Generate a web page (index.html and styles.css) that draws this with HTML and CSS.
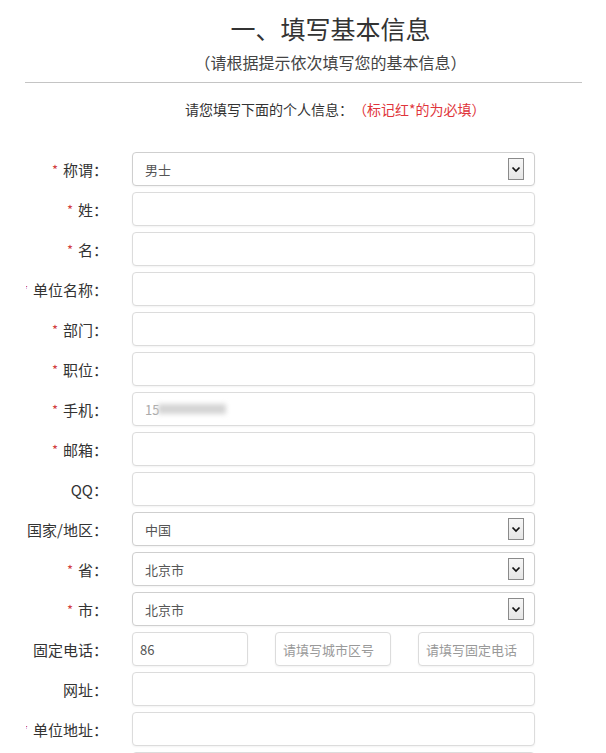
FILE: index.html
```html
<!DOCTYPE html>
<html lang="zh-CN">
<head>
  <meta charset="UTF-8" />
  <meta name="viewport" content="width=device-width, initial-scale=1.0"/>
  <title>填写基本信息</title>
  <link rel="stylesheet" href="styles.css">
</head>
<body>

<div class="page">
  <div class="head">
    <h1>一、填写基本信息</h1>
    <p class="sub">（请根据提示依次填写您的基本信息）</p>
  </div>

  <hr class="rule" />

  <p class="intro">请您填写下面的个人信息：<span class="red">（标记红*的为必填）</span></p>

  <form id="infoForm" class="form">
    <div class="row">
      <label class="lbl"><span class="req">*</span><span>称谓：</span></label>
      <div class="select-wrap">
        <select class="field">
          <option>男士</option>
          <option>女士</option>
        </select>
        <span class="arrow"><svg width="14" height="20" viewBox="0 0 14 20"><path d="M3.5 8.5 L7 12 L10.5 8.5" fill="none" stroke="#111" stroke-width="1.7"/></svg></span>
      </div>
    </div>

    <div class="row">
      <label class="lbl"><span class="req">*</span><span>姓：</span></label>
      <input type="text" class="field" />
    </div>

    <div class="row">
      <label class="lbl"><span class="req">*</span><span>名：</span></label>
      <input type="text" class="field" />
    </div>

    <div class="row">
      <label class="lbl"><span class="req">*</span><span>单位名称：</span></label>
      <input type="text" class="field" />
    </div>

    <div class="row">
      <label class="lbl"><span class="req">*</span><span>部门：</span></label>
      <input type="text" class="field" />
    </div>

    <div class="row">
      <label class="lbl"><span class="req">*</span><span>职位：</span></label>
      <input type="text" class="field" />
    </div>

    <div class="row">
      <label class="lbl"><span class="req">*</span><span>手机：</span></label>
      <div class="select-wrap">
        <input type="text" class="field phone" value="15" />
        <span class="blur"></span>
      </div>
    </div>

    <div class="row">
      <label class="lbl"><span class="req">*</span><span>邮箱：</span></label>
      <input type="text" class="field" />
    </div>

    <div class="row">
      <label class="lbl"><span>QQ：</span></label>
      <input type="text" class="field" />
    </div>

    <div class="row">
      <label class="lbl"><span>国家/地区：</span></label>
      <div class="select-wrap">
        <select class="field">
          <option>中国</option>
        </select>
        <span class="arrow"><svg width="14" height="20" viewBox="0 0 14 20"><path d="M3.5 8.5 L7 12 L10.5 8.5" fill="none" stroke="#111" stroke-width="1.7"/></svg></span>
      </div>
    </div>

    <div class="row">
      <label class="lbl"><span class="req">*</span><span>省：</span></label>
      <div class="select-wrap">
        <select class="field">
          <option>北京市</option>
        </select>
        <span class="arrow"><svg width="14" height="20" viewBox="0 0 14 20"><path d="M3.5 8.5 L7 12 L10.5 8.5" fill="none" stroke="#111" stroke-width="1.7"/></svg></span>
      </div>
    </div>

    <div class="row">
      <label class="lbl"><span class="req">*</span><span>市：</span></label>
      <div class="select-wrap">
        <select class="field">
          <option>北京市</option>
        </select>
        <span class="arrow"><svg width="14" height="20" viewBox="0 0 14 20"><path d="M3.5 8.5 L7 12 L10.5 8.5" fill="none" stroke="#111" stroke-width="1.7"/></svg></span>
      </div>
    </div>

    <div class="row">
      <label class="lbl"><span>固定电话：</span></label>
      <div class="tel">
        <input type="text" class="field small" value="86" />
        <input type="text" class="field small" placeholder="请填写城市区号" />
        <input type="text" class="field small" placeholder="请填写固定电话" />
      </div>
    </div>

    <div class="row">
      <label class="lbl"><span>网址：</span></label>
      <input type="text" class="field" />
    </div>

    <div class="row">
      <label class="lbl"><span class="req">*</span><span>单位地址：</span></label>
      <input type="text" class="field" />
    </div>

    <div class="row last">
      <label class="lbl"><span>邮编：</span></label>
      <input type="text" class="field" />
    </div>
  </form>
</div>

</body>
</html>
```

FILE: styles.css
```css
body {
  font-family: "Noto Sans CJK SC", "Noto Sans", sans-serif;
  margin: 0;
  padding: 0;
  background: #fff;
  color: #333;
  text-spacing-trim: space-all;
}

.page {
  padding: 0 24px 0 25px;
}

.head {
  text-align: center;
  padding-left: 54px;
}

h1 {
  font-size: 25px;
  font-weight: normal;
  line-height: 34px;
  margin: 11px 0 0;
  color: #333;
}

.sub {
  font-size: 16px;
  line-height: 24px;
  margin: 5px 0 0;
  color: #444;
}

.rule {
  border: none;
  border-top: 1px solid #c4c4c4;
  margin: 8px 0 0;
}

.intro {
  font-size: 14px;
  line-height: 20px;
  margin: 16px 0 0;
  padding-left: 160px;
  color: #333;
}

.red {
  color: #e0353b;
}

.form {
  margin-top: 33px;
  height: 601px;
  overflow: hidden;
}

.row {
  display: flex;
  align-items: center;
  height: 34px;
  margin-bottom: 6px;
}

.lbl {
  display: flex;
  justify-content: flex-end;
  align-items: center;
  width: 82px;
  margin-left: 1px;
  margin-right: 24px;
  white-space: nowrap;
  overflow: hidden;
  font-size: 15px;
  color: #333;
}

.req {
  color: #d2403f;
  font-size: 13px;
  margin-right: 5px;
}

.field {
  box-sizing: border-box;
  width: 403px;
  height: 34px;
  padding: 0 12px;
  border: 1px solid #dcdcdc;
  border-radius: 4px;
  background: #fff;
  font-family: inherit;
  font-size: 13px;
  color: #555;
  box-shadow: 0 1px 2px rgba(0, 0, 0, 0.05);
  outline: none;
}

select.field {
  appearance: none;
  -webkit-appearance: none;
  border-color: #cfcfcf;
}

.select-wrap {
  position: relative;
  width: 403px;
  height: 34px;
}

.arrow {
  position: absolute;
  right: 11px;
  top: 6px;
  width: 14px;
  height: 20px;
  border: 1px solid #8a8a8a;
  background: linear-gradient(#f7f7f7, #e6e6e6);
  pointer-events: none;
}

.arrow svg {
  display: block;
}

.phone {
  color: #aaa;
}

.blur {
  position: absolute;
  left: 26px;
  top: 12px;
  width: 68px;
  height: 10px;
  background: #d4d4d4;
  filter: blur(2.5px);
  pointer-events: none;
}

.tel {
  display: grid;
  grid-template-columns: repeat(3, 116px);
  gap: 27px;
  width: 403px;
}

.field.small {
  width: 116px;
  padding: 0 7px;
}

.field::placeholder {
  color: #999;
}
```
